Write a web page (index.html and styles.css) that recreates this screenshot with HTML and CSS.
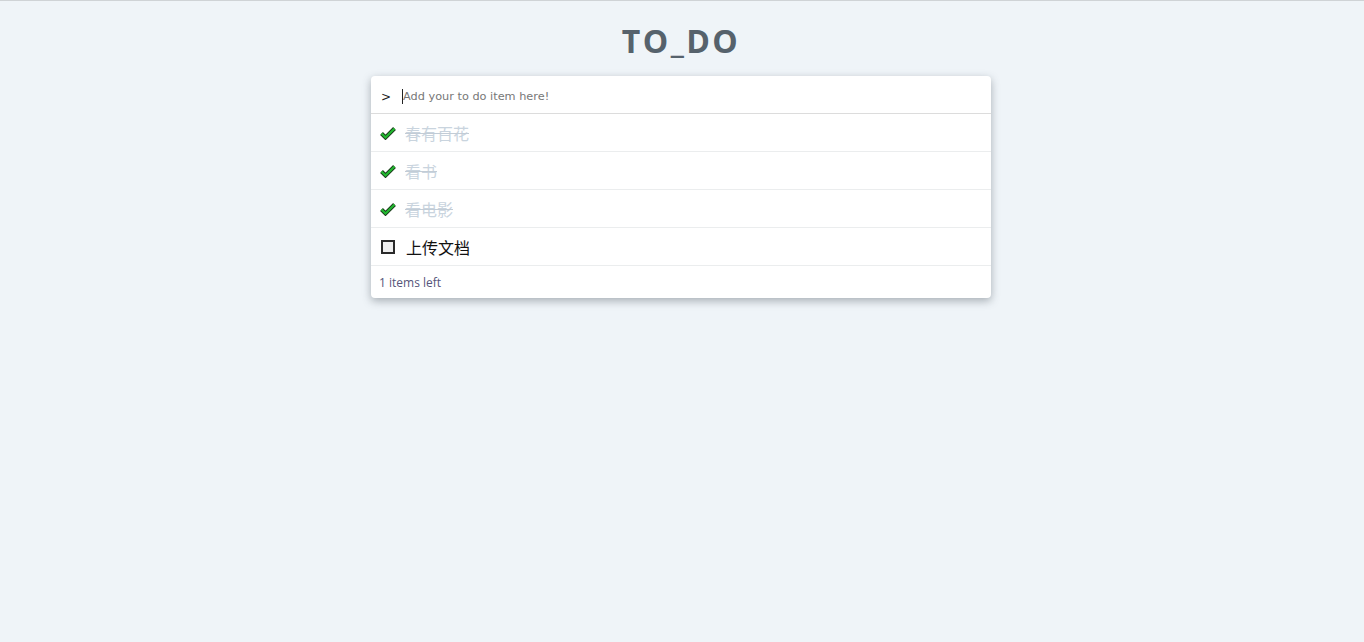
FILE: index.html
```html
<!DOCTYPE html>
<html>
<head>
<meta charset="utf-8">
<link rel="stylesheet" href="styles.css">
</head>
<body>
<div class="page">
  <h1 class="title">TO_DO</h1>
  <div class="card">
    <div class="input-row">
      <span class="prompt">&gt;</span>
      <input class="new-item" type="text" placeholder="Add your to do item here!">
    </div>
    <ul class="list">
      <li class="item done">
        <svg class="check" viewBox="0 0 16 14" width="16" height="14"><path d="M1.5 7.5 L5.5 11.5 L14.5 2.5" fill="none" stroke="#1c3a1c" stroke-width="4" stroke-linejoin="miter"/><path d="M1.5 7.5 L5.5 11.5 L14.5 2.5" fill="none" stroke="#22b830" stroke-width="2.2"/></svg>
        <span class="label">春有百花</span>
      </li>
      <li class="item done">
        <svg class="check" viewBox="0 0 16 14" width="16" height="14"><path d="M1.5 7.5 L5.5 11.5 L14.5 2.5" fill="none" stroke="#1c3a1c" stroke-width="4" stroke-linejoin="miter"/><path d="M1.5 7.5 L5.5 11.5 L14.5 2.5" fill="none" stroke="#22b830" stroke-width="2.2"/></svg>
        <span class="label">看书</span>
      </li>
      <li class="item done">
        <svg class="check" viewBox="0 0 16 14" width="16" height="14"><path d="M1.5 7.5 L5.5 11.5 L14.5 2.5" fill="none" stroke="#1c3a1c" stroke-width="4" stroke-linejoin="miter"/><path d="M1.5 7.5 L5.5 11.5 L14.5 2.5" fill="none" stroke="#22b830" stroke-width="2.2"/></svg>
        <span class="label">看电影</span>
      </li>
      <li class="item">
        <span class="box"></span>
        <span class="label">上传文档</span>
      </li>
    </ul>
    <div class="footer">1 items left</div>
  </div>
</div>
</body>
</html>
```
FILE: styles.css
```css
html, body {
  margin: 0;
  padding: 0;
  height: 100%;
}
body {
  background: #eff4f8;
  border-top: 1px solid #cfd3d6;
  box-sizing: border-box;
  font-family: "Open Sans", "Noto Sans CJK SC", sans-serif;
}
.page {
  display: flex;
  flex-direction: column;
  align-items: center;
  padding-right: 2px;
}
.title {
  margin: 20px 0 0;
  height: 55px;
  line-height: 40px;
  font-family: "Open Sans", sans-serif;
  font-size: 32px;
  font-weight: 700;
  letter-spacing: 2.4px;
  color: #56626c;
}
.card {
  width: 620px;
  background: #fff;
  border-radius: 4px;
  box-shadow: 0 3px 8px rgba(60, 70, 80, 0.4);
}
.input-row {
  display: flex;
  align-items: center;
  height: 37px;
  border-bottom: 1px solid #dcdcdc;
  padding-left: 10px;
  padding-top: 4px;
  box-sizing: border-box;
  height: 38px;
}
.prompt {
  font-family: "DejaVu Sans", sans-serif;
  font-size: 12px;
  color: #222;
  width: 21px;
}
.new-item {
  flex: 1;
  border: none;
  outline: none;
  padding: 0;
  font-family: "DejaVu Sans", sans-serif;
  font-size: 11.3px;
  color: #333;
  background: transparent;
  border-left: 1px solid #222;
  height: 15px;
}
.new-item::placeholder {
  color: #777;
}
.list {
  list-style: none;
  margin: 0;
  padding: 0;
}
.item {
  display: flex;
  align-items: center;
  height: 37px;
  border-bottom: 1px solid #ebedee;
  padding-left: 9px;
}
.check {
  width: 16px;
  height: 14px;
  margin-right: 9px;
}
.box {
  width: 10px;
  height: 10px;
  border: 2px solid #2a2a2a;
  background: #eeeeee;
  margin-left: 1px;
  margin-right: 11px;
}
.label {
  font-family: "Noto Sans CJK SC", sans-serif;
  font-size: 16px;
  color: #111;
}
.done .label {
  color: #c9d4de;
  text-decoration: line-through;
  text-decoration-color: #c2ccd6;
  text-decoration-thickness: 1px;
}
.footer {
  height: 32px;
  line-height: 34px;
  padding-left: 8px;
  font-family: "Open Sans", sans-serif;
  font-size: 12px;
  color: #55557a;
}
```
